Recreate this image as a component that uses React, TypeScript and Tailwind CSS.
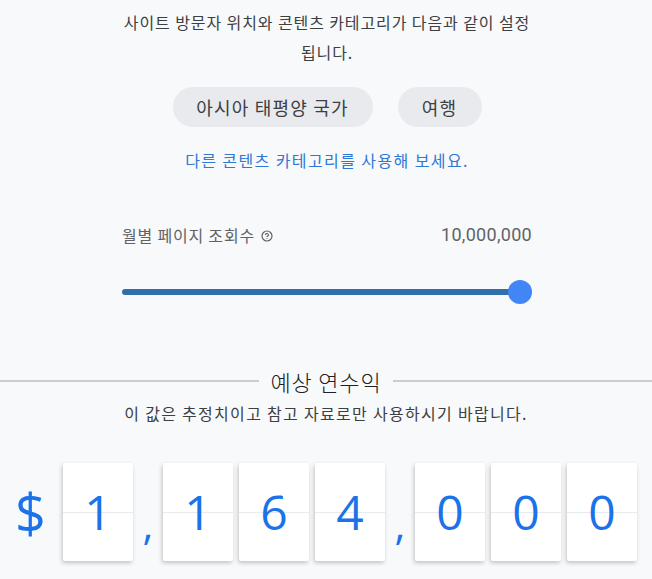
import { CircleHelp } from "lucide-react";

const kr = "font-['Noto_Sans_CJK_KR',sans-serif]";
const digitFont = "font-['Open_Sans','Roboto',sans-serif]";

const Card = ({ d }: { d: string }) => (
  <div className="relative h-[98px] w-[70px] rounded-[2px] bg-white shadow-[-1px_2px_4px_rgba(0,0,0,0.22)]">
    <div className="absolute left-0 right-0 top-[49px] h-px bg-[#e8eaed]" />
    <div
      className={`relative text-center text-[48px] leading-[98px] text-[#1a73e8] ${digitFont}`}
    >
      {d}
    </div>
  </div>
);

const Comma = () => (
  <div
    className={`h-[98px] w-[30px] translate-y-[12px] text-center text-[42px] leading-[98px] text-[#1a73e8] ${digitFont}`}
  >
    ,
  </div>
);

const Pill = ({ label, w }: { label: string; w: string }) => (
  <div
    className={`flex h-10 items-center justify-center rounded-full bg-[#e8eaed] text-[18px] tracking-[1.2px] text-[#3c4043] ${w}`}
  >
    {label}
  </div>
);

export default function App() {
  return (
    <div className={`min-h-[579px] w-full bg-[#f8f9fa] pt-[7px] ${kr}`}>
      <section className="mx-auto flex w-[412px] flex-col items-center pl-[2px]">
        <p className="text-center text-[16px] leading-[30px] tracking-[0.9px] text-[#3c4043]">
          사이트 방문자 위치와 콘텐츠 카테고리가 다음과 같이 설정
          <br />
          됩니다.
        </p>

        <div className="mt-5 flex gap-[25px]">
          <Pill label="아시아 태평양 국가" w="w-[200px]" />
          <Pill label="여행" w="w-[84px]" />
        </div>

        <p className="mt-[22px] text-[16px] leading-[22px] tracking-[1.4px] text-[#2f77d6]">
          다른 콘텐츠 카테고리를 사용해 보세요.
        </p>

        <div className="mt-[52px] flex w-full items-center justify-between leading-6">
          <div className="flex items-center gap-[6px] text-[16px] tracking-[0.8px] text-[#5f6368]">
            <span>월별 페이지 조회수</span>
            <CircleHelp size={12} strokeWidth={2.4} className="mt-[1px]" />
          </div>
          <span className="font-['Roboto',sans-serif] text-[18px] tracking-[0.3px] text-[#5f6368]">
            10,000,000
          </span>
        </div>

        <div className="mt-[33px] flex h-6 w-full items-center">
          <div className="h-[6px] flex-1 rounded-l-full bg-[#2f6fab]" />
          <div className="-ml-[12px] h-6 w-6 rounded-full bg-[#4285f4]" />
        </div>
      </section>

      <div className="mt-[63px] flex items-center">
        <div className="h-[2px] flex-1 bg-[#cccccc]" />
        <h2 className="mx-3 text-[22px] font-light leading-7 tracking-[0.8px] text-[#202124]">
          예상 연수익
        </h2>
        <div className="h-[2px] flex-1 bg-[#cccccc]" />
      </div>
      <p className="mt-2 text-center text-[16px] leading-5 tracking-[1.3px] text-[#3c4043]">
        이 값은 추정치이고 참고 자료로만 사용하시기 바랍니다.
      </p>

      <div className="mt-10 flex items-center justify-center">
        <div
          className={`h-[98px] w-[48px] text-left text-[54px] leading-[98px] text-[#1a73e8] ${digitFont}`}
        >
          $
        </div>
        <Card d="1" />
        <Comma />
        <div className="flex gap-[6px]">
          <Card d="1" />
          <Card d="6" />
          <Card d="4" />
        </div>
        <Comma />
        <div className="flex gap-[6px]">
          <Card d="0" />
          <Card d="0" />
          <Card d="0" />
        </div>
      </div>
    </div>
  );
}
